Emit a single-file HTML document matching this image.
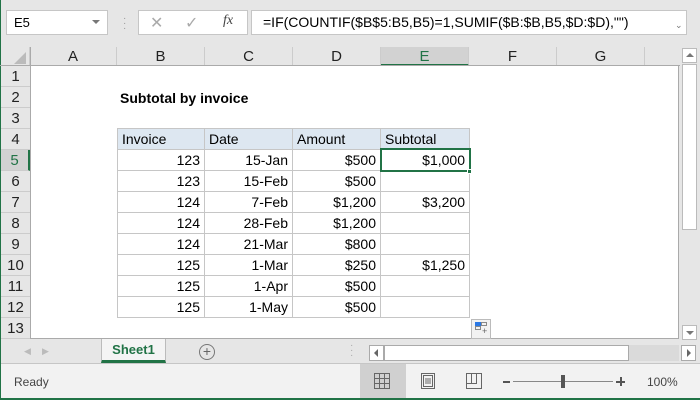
<!DOCTYPE html>
<html><head><style>
*{margin:0;padding:0;box-sizing:border-box}
body{width:700px;height:400px;overflow:hidden;background:#e6e6e6;font-family:"Liberation Sans",sans-serif;position:relative}
.a{position:absolute}
.cell{position:absolute;font-size:14px;line-height:21px;height:21px;white-space:nowrap}
.ch{position:absolute;top:47px;height:19px;font-size:15px;text-align:center;line-height:19px;color:#222;border-right:1px solid #ccc;background:#e6e6e6}
.rh{position:absolute;left:1px;width:29px;height:21px;font-size:15px;text-align:center;line-height:21px;color:#222;border-bottom:1px solid #ccc;background:#e6e6e6}
.t{position:absolute;height:21px;font-size:14px;line-height:21px;padding:0 4px;border-right:1px solid #c6c6c6;border-bottom:1px solid #c6c6c6;text-align:right}
</style></head><body>
<div class="a" style="left:0;top:0;width:1px;height:400px;background:#217346"></div>
<div class="a" style="left:0;top:398px;width:700px;height:2px;background:#217346"></div>
<!-- formula bar -->
<div class="a" style="left:6px;top:10px;width:102px;height:25px;background:#fff;border:1px solid #c6c6c6;font-size:13px;line-height:23px;padding-left:7px">E5</div>
<div class="a" style="left:92px;top:20px;width:0;height:0;border-left:4px solid transparent;border-right:4px solid transparent;border-top:4px solid #777"></div>
<div class="a" style="left:123px;top:16px;color:#999;font-size:10px;line-height:5px">·<br>·<br>·</div>
<div class="a" style="left:138px;top:10px;width:110px;height:25px;background:#fff;border:1px solid #c6c6c6"></div>
<div class="a" style="left:150px;top:13px;font-size:16px;color:#aaa">✕</div>
<div class="a" style="left:185px;top:13px;font-size:16px;color:#aaa">✓</div>
<div class="a" style="left:223px;top:13px;font-size:14px;font-style:italic;font-family:'Liberation Serif',serif;color:#444">fx</div>
<div class="a" style="left:251px;top:10px;width:436px;height:25px;background:#fff;border:1px solid #c6c6c6;font-size:14px;line-height:23px;padding-left:11px">=IF(COUNTIF($B$5:B5,B5)=1,SUMIF($B:$B,B5,$D:$D),"")</div>
<div class="a" style="left:675px;top:20px;font-size:9px;color:#777">⌄</div>
<!-- grid -->
<div class="a" style="left:30px;top:66px;width:649px;height:273px;background:#fff;border-right:1px solid #aaa;border-bottom:1px solid #aaa"></div>
<div class="a" style="left:1px;top:47px;width:29px;height:19px;background:#e6e6e6;border-right:1px solid #ccc"></div>
<div class="a" style="left:14px;top:52px;width:0;height:0;border-left:12px solid transparent;border-bottom:12px solid #bbb"></div>
<div class="ch" style="left:30px;width:87px">A</div>
<div class="ch" style="left:117px;width:88px">B</div>
<div class="ch" style="left:205px;width:88px">C</div>
<div class="ch" style="left:293px;width:88px">D</div>
<div class="ch" style="left:381px;width:88px;background:#d2d2d2;color:#217346;border-bottom:2px solid #217346">E</div>
<div class="ch" style="left:469px;width:88px">F</div>
<div class="ch" style="left:557px;width:88px">G</div>
<div class="ch" style="left:645px;width:34px;border-right:none"></div>
<div class="a" style="left:0;top:65px;width:680px;height:1px;background:#aaa"></div>
<div class="a" style="left:30px;top:47px;width:1px;height:292px;background:#aaa"></div>
<div class="rh" style="top:66px">1</div><div class="rh" style="top:87px">2</div><div class="rh" style="top:108px">3</div><div class="rh" style="top:129px">4</div>
<div class="rh" style="top:150px;background:#d2d2d2;color:#217346;border-right:2px solid #217346">5</div>
<div class="rh" style="top:171px">6</div><div class="rh" style="top:192px">7</div><div class="rh" style="top:213px">8</div><div class="rh" style="top:234px">9</div><div class="rh" style="top:255px">10</div><div class="rh" style="top:276px">11</div><div class="rh" style="top:297px">12</div><div class="rh" style="top:318px">13</div>
<div class="cell" style="left:120px;top:88px;font-weight:bold">Subtotal by invoice</div>
<!-- table -->
<div class="a" style="left:117px;top:128px;width:353px;height:190px;border-left:1px solid #c6c6c6;border-top:1px solid #c6c6c6"></div>
<div class="t" style="left:118px;top:129px;width:87px;background:#dde7f1;text-align:left">Invoice</div>
<div class="t" style="left:205px;top:129px;width:88px;background:#dde7f1;text-align:left">Date</div>
<div class="t" style="left:293px;top:129px;width:88px;background:#dde7f1;text-align:left">Amount</div>
<div class="t" style="left:381px;top:129px;width:89px;background:#dde7f1;text-align:left">Subtotal</div>
<div class="t" style="left:118px;top:150px;width:87px">123</div><div class="t" style="left:205px;top:150px;width:88px">15-Jan</div><div class="t" style="left:293px;top:150px;width:88px">$500</div><div class="t" style="left:381px;top:150px;width:89px">$1,000</div>
<div class="t" style="left:118px;top:171px;width:87px">123</div><div class="t" style="left:205px;top:171px;width:88px">15-Feb</div><div class="t" style="left:293px;top:171px;width:88px">$500</div><div class="t" style="left:381px;top:171px;width:89px"></div>
<div class="t" style="left:118px;top:192px;width:87px">124</div><div class="t" style="left:205px;top:192px;width:88px">7-Feb</div><div class="t" style="left:293px;top:192px;width:88px">$1,200</div><div class="t" style="left:381px;top:192px;width:89px">$3,200</div>
<div class="t" style="left:118px;top:213px;width:87px">124</div><div class="t" style="left:205px;top:213px;width:88px">28-Feb</div><div class="t" style="left:293px;top:213px;width:88px">$1,200</div><div class="t" style="left:381px;top:213px;width:89px"></div>
<div class="t" style="left:118px;top:234px;width:87px">124</div><div class="t" style="left:205px;top:234px;width:88px">21-Mar</div><div class="t" style="left:293px;top:234px;width:88px">$800</div><div class="t" style="left:381px;top:234px;width:89px"></div>
<div class="t" style="left:118px;top:255px;width:87px">125</div><div class="t" style="left:205px;top:255px;width:88px">1-Mar</div><div class="t" style="left:293px;top:255px;width:88px">$250</div><div class="t" style="left:381px;top:255px;width:89px">$1,250</div>
<div class="t" style="left:118px;top:276px;width:87px">125</div><div class="t" style="left:205px;top:276px;width:88px">1-Apr</div><div class="t" style="left:293px;top:276px;width:88px">$500</div><div class="t" style="left:381px;top:276px;width:89px"></div>
<div class="t" style="left:118px;top:297px;width:87px">125</div><div class="t" style="left:205px;top:297px;width:88px">1-May</div><div class="t" style="left:293px;top:297px;width:88px">$500</div><div class="t" style="left:381px;top:297px;width:89px"></div>
<!-- selection -->
<div class="a" style="left:380px;top:148px;width:91px;height:24px;border:2px solid #217346"></div>
<div class="a" style="left:467px;top:169px;width:5px;height:5px;background:#217346;border:1px solid #fff"></div>
<!-- quick analysis -->
<div class="a" style="left:471px;top:319px;width:20px;height:20px;background:#f2f2f2;border:1px solid #bbb"></div>
<div class="a" style="left:475px;top:322px;width:6px;height:4px;background:#2b78e4"></div>
<div class="a" style="left:481px;top:322px;width:6px;height:4px;border:1px solid #888"></div>
<div class="a" style="left:475px;top:326px;width:6px;height:4px;border:1px solid #888"></div>
<div class="a" style="left:482px;top:326px;font-size:9px;color:#666">+</div>
<!-- vertical scrollbar -->
<div class="a" style="left:682px;top:48px;width:15px;height:15px;background:#fff;border:1px solid #bbb"></div>
<div class="a" style="left:686px;top:53px;border-left:4px solid transparent;border-right:4px solid transparent;border-bottom:4px solid #777"></div>
<div class="a" style="left:682px;top:64px;width:15px;height:166px;background:#fff;border:1px solid #bbb"></div>
<div class="a" style="left:682px;top:325px;width:15px;height:15px;background:#fff;border:1px solid #bbb"></div>
<div class="a" style="left:686px;top:331px;border-left:4px solid transparent;border-right:4px solid transparent;border-top:4px solid #777"></div>
<!-- tab bar -->
<div class="a" style="left:24px;top:346px;font-size:9px;color:#bbb">◀</div>
<div class="a" style="left:42px;top:346px;font-size:9px;color:#bbb">▶</div>
<div class="a" style="left:101px;top:339px;width:65px;height:24px;background:#f4f4f4;border-left:1px solid #bbb;border-right:1px solid #bbb;border-bottom:3px solid #217346;text-align:center;font-size:13px;font-weight:bold;color:#217346;line-height:22px">Sheet1</div>
<div class="a" style="left:199px;top:344px;width:16px;height:16px;border:1px solid #777;border-radius:50%;text-align:center;font-size:14px;line-height:13px;color:#666">+</div>
<div class="a" style="left:350px;top:343px;color:#aaa;font-size:10px;line-height:5px">·<br>·<br>·</div>
<div class="a" style="left:369px;top:345px;width:15px;height:16px;background:#fff;border:1px solid #aaa"></div>
<div class="a" style="left:374px;top:349px;border-top:4px solid transparent;border-bottom:4px solid transparent;border-right:4px solid #666"></div>
<div class="a" style="left:384px;top:345px;width:245px;height:16px;background:#fff;border:1px solid #aaa"></div>
<div class="a" style="left:629px;top:345px;width:50px;height:16px;background:#dadada"></div>
<div class="a" style="left:681px;top:345px;width:15px;height:16px;background:#fff;border:1px solid #aaa"></div>
<div class="a" style="left:687px;top:349px;border-top:4px solid transparent;border-bottom:4px solid transparent;border-left:4px solid #666"></div>
<!-- status bar -->
<div class="a" style="left:1px;top:363px;width:699px;height:35px;background:#f2f2f2;border-top:1px solid #c6c6c6"></div>
<div class="a" style="left:14px;top:375px;font-size:12px;color:#444">Ready</div>
<div class="a" style="left:360px;top:364px;width:46px;height:34px;background:#d0d0d0"></div>
<svg class="a" style="left:374px;top:373px" width="16" height="16"><rect x="0.5" y="0.5" width="15" height="15" fill="none" stroke="#666"/><path d="M5.5 0v16M10.5 0v16M0 5.5h16M0 10.5h16" stroke="#666"/></svg>
<svg class="a" style="left:420px;top:373px" width="16" height="16"><rect x="1.5" y="0.5" width="13" height="15" fill="none" stroke="#666"/><rect x="3.5" y="2.5" width="9" height="11" fill="none" stroke="#666"/><path d="M5 6h6M5 8h6M5 10h6" stroke="#666"/></svg>
<svg class="a" style="left:466px;top:373px" width="16" height="16"><rect x="0.5" y="0.5" width="15" height="15" fill="none" stroke="#666"/><path d="M5.5 0v10.5h5V0M0 10.5h5.5" stroke="#666" fill="none"/></svg>
<div class="a" style="left:503px;top:381px;width:7px;height:2px;background:#555"></div>
<div class="a" style="left:513px;top:381px;width:100px;height:1px;background:#888"></div>
<div class="a" style="left:561px;top:375px;width:4px;height:13px;background:#555"></div>
<div class="a" style="left:616px;top:381px;width:9px;height:2px;background:#555"></div>
<div class="a" style="left:619.5px;top:377px;width:2px;height:9px;background:#555"></div>
<div class="a" style="left:647px;top:375px;font-size:12px;color:#444">100%</div>
</body></html>
